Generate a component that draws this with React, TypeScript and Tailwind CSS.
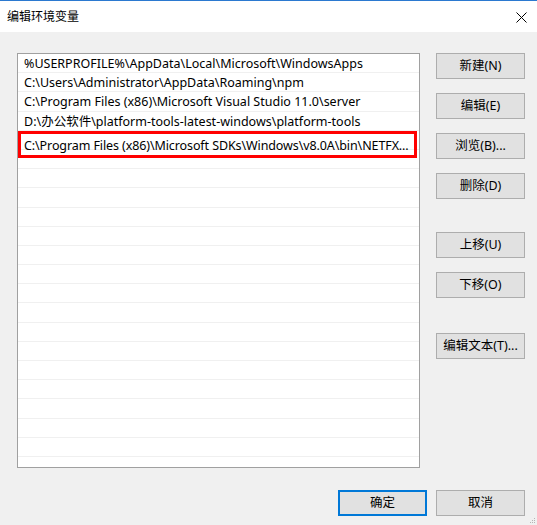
import React from 'react';

const paths = [
  '%USERPROFILE%\\AppData\\Local\\Microsoft\\WindowsApps',
  'C:\\Users\\Administrator\\AppData\\Roaming\\npm',
  'C:\\Program Files (x86)\\Microsoft Visual Studio 11.0\\server',
  'D:\\办公软件\\platform-tools-latest-windows\\platform-tools',
];

const editing = 'C:\\Program Files (x86)\\Microsoft SDKs\\Windows\\v8.0A\\bin\\NETFX...';

const font = { fontFamily: '"Noto Sans", "Noto Sans CJK SC", sans-serif' };

function Btn({ label, className = '' }: { label: string; className?: string }) {
  return (
    <button
      className={
        'w-[89px] h-[26px] bg-[#e1e1e1] border border-[#adadad] text-[12.5px] text-black flex items-center justify-center ' +
        className
      }
    >
      {label}
    </button>
  );
}

export default function App() {
  const emptyRows = Array.from({ length: 18 });

  return (
    <div className="w-[537px] h-[525px] bg-[#f0f0f0] flex flex-col overflow-hidden relative" style={font}>
      {/* Title bar */}
      <div className="h-[32px] bg-white border-t border-[#2b79d0] flex items-center justify-between pl-[7px] pr-[10px]">
        <span className="text-[12px] text-black">编辑环境变量</span>
        <svg width="11" height="11" viewBox="0 0 11 11" className="mt-[1px]">
          <path d="M0.5 0.5 L10.5 10.5 M10.5 0.5 L0.5 10.5" stroke="#000" strokeWidth="1" />
        </svg>
      </div>

      {/* Body */}
      <div className="flex pl-[17px] pt-[21px] gap-[16px]">
        {/* List */}
        <div className="relative w-[403px] h-[415px] bg-white border border-[#a0a0a0] overflow-hidden">
          {paths.map((p) => (
            <div
              key={p}
              className="h-[19.2px] border-b border-[#f0f0f0] pl-[6px] pt-[1px] text-[12.5px] leading-[18px] text-black whitespace-nowrap"
            >
              {p}
            </div>
          ))}
          <div className="h-[19.2px] border-b border-[#f0f0f0]" />
          {emptyRows.map((_, i) => (
            <div key={i} className="h-[19.2px] border-b border-[#f0f0f0]" />
          ))}
          {/* row being edited */}
          <div className="absolute left-0 top-[77px] w-[399px] h-[27px] border-[3px] border-[#ff0000] pl-[3px] pt-[3px] text-[12.5px] tracking-[-0.1px] leading-[18px] text-black whitespace-nowrap overflow-hidden">
            {editing}
          </div>
        </div>

        {/* Buttons */}
        <div className="flex flex-col">
          <Btn label="新建(N)" />
          <Btn label="编辑(E)" className="mt-[14px]" />
          <Btn label="浏览(B)..." className="mt-[14px]" />
          <Btn label="删除(D)" className="mt-[14px]" />
          <Btn label="上移(U)" className="mt-[33px]" />
          <Btn label="下移(O)" className="mt-[14px]" />
          <Btn label="编辑文本(T)..." className="mt-[35px]" />
        </div>
      </div>

      {/* Footer */}
      <div className="flex justify-end gap-[9px] pr-[12px] mt-[22px]">
        <button className="w-[89px] h-[26px] bg-[#e1e1e1] border-2 border-[#0078d7] text-[12.5px] text-black flex items-center justify-center">
          确定
        </button>
        <Btn label="取消" />
      </div>

      {/* Resize grip */}
      <svg width="8" height="8" viewBox="0 0 8 8" className="absolute right-[1px] bottom-[1px]">
        <rect x="6" y="2" width="1" height="1" fill="#b5b5b5" />
        <rect x="4" y="4" width="1" height="1" fill="#b5b5b5" />
        <rect x="6" y="4" width="1" height="1" fill="#b5b5b5" />
        <rect x="2" y="6" width="1" height="1" fill="#b5b5b5" />
        <rect x="4" y="6" width="1" height="1" fill="#b5b5b5" />
        <rect x="6" y="6" width="1" height="1" fill="#b5b5b5" />
      </svg>
    </div>
  );
}
